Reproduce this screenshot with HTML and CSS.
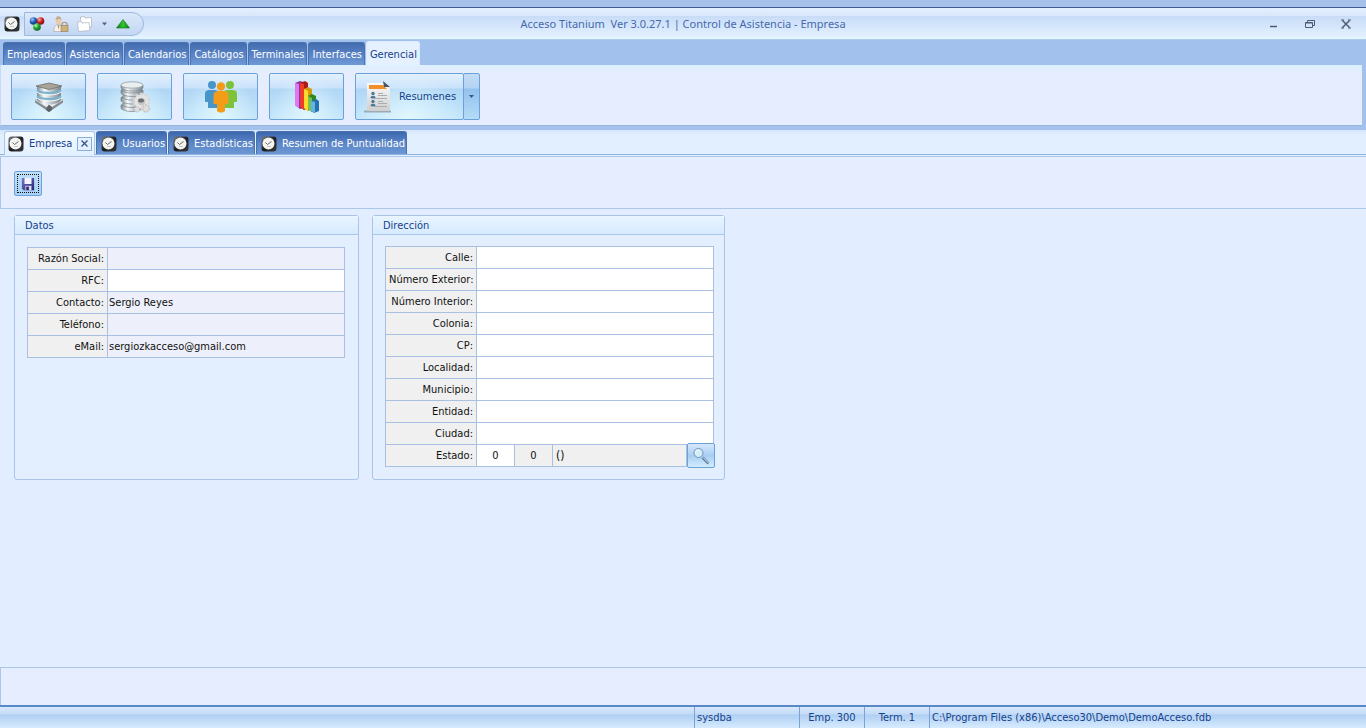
FILE: index.html
```html
<!DOCTYPE html>
<html lang="es">
<head>
<meta charset="utf-8">
<title>Acceso Titanium - Empresa</title>
<link rel="stylesheet" href="styles.css">
</head>
<body>
<svg class="defs" aria-hidden="true">
  <defs>
    <linearGradient id="silver" x1="0" x2="1" y1="0" y2="0"><stop offset="0" stop-color="#7d878d"/><stop offset=".3" stop-color="#f7fafb"/><stop offset=".55" stop-color="#c4cdd3"/><stop offset="1" stop-color="#7b848a"/></linearGradient>
    <linearGradient id="dark" x1="0" x2="1" y1="0" y2="1"><stop offset="0" stop-color="#7c8084"/><stop offset=".5" stop-color="#1d1e20"/><stop offset="1" stop-color="#3a3c3f"/></linearGradient>
    <linearGradient id="green" x1="0" x2="1" y1="0" y2="0"><stop offset="0" stop-color="#0b7a0b"/><stop offset=".5" stop-color="#35c335"/><stop offset="1" stop-color="#0b820f"/></linearGradient>
    <linearGradient id="disk" x1="0" x2="1" y1="0" y2="1"><stop offset="0" stop-color="#7a76c8"/><stop offset="1" stop-color="#252273"/></linearGradient>
    <linearGradient id="paper" x1="0" x2="0" y1="0" y2="1"><stop offset="0" stop-color="#fafafa"/><stop offset="1" stop-color="#cfcfcf"/></linearGradient>
    <radialGradient id="ballBlue" cx=".35" cy=".3" r=".8"><stop offset="0" stop-color="#9cc8ff"/><stop offset=".5" stop-color="#1f5bb8"/><stop offset="1" stop-color="#0a2766"/></radialGradient>
    <radialGradient id="ballRed" cx=".35" cy=".3" r=".8"><stop offset="0" stop-color="#ffaaa0"/><stop offset=".5" stop-color="#c9201c"/><stop offset="1" stop-color="#6e0808"/></radialGradient>
    <radialGradient id="ballGreen" cx=".35" cy=".3" r=".8"><stop offset="0" stop-color="#b4f7b0"/><stop offset=".5" stop-color="#1c9f2a"/><stop offset="1" stop-color="#07541a"/></radialGradient>
    <symbol id="clock" viewBox="0 0 16 16">
      <rect x=".5" y=".5" width="15" height="15" rx="3" fill="url(#dark)"/>
      <circle cx="7.500" cy="7.500" r="6" fill="#f4f5f1"/>
      <path d="M4.500 6.500 6.500 8.500 10.500 5.500" fill="none" stroke="#666"/>
      <path d="M6 10.500h4" stroke="#bbb" stroke-width=".8"/>
    </symbol>
  </defs>
</svg>
<div class="app">
  <div class="desktop-edge"></div>
  <header class="titlebar">
    <div class="quick">
      <svg class="icon16"><use href="#clock"/></svg>
      <div class="quick-bar">
        <button class="plain" aria-label="Módulos"><svg width="16" height="16" viewBox="0 0 16 16"><circle cx="4.500" cy="5" r="3.800" fill="url(#ballBlue)"/><circle cx="11.500" cy="5" r="3.800" fill="url(#ballRed)"/><circle cx="8" cy="11" r="3.800" fill="url(#ballGreen)"/></svg></button>
        <button class="plain" aria-label="Bloquear usuario"><svg width="16" height="16" viewBox="0 0 16 16"><path d="M1 15.500c0-4 1-7 4-7s5 2 5 7z" fill="#f6f3ef" stroke="#aaa29b" stroke-width=".6"/><path d="m4.500 9 1 5 1-5z" fill="#a89880"/><ellipse cx="5.500" cy="4.500" rx="2.800" ry="4" fill="#eec9a3"/><path d="M2.600 4C2.600-1 8.400-1 8.400 4 7 2.500 5 2.500 2.600 4z" fill="#bcae9b"/><path d="M9 10V8.500c0-3 5-3 5 0V10" fill="none" stroke="#a59881" stroke-width="1.200"/><rect x="8" y="9.500" width="7" height="6" fill="#ceb27a" stroke="#91794c" stroke-width=".6"/></svg></button>
        <button class="plain" aria-label="Ventanas"><svg width="16" height="16" viewBox="0 0 16 16"><path d="M3.500 4.500V1l4-.5.500 1.500 6.500-.5V11h-3" fill="#fff" stroke="#aab2bd" stroke-width=".7"/><path d="m.5 6 4-.5.500 1.500 7-.5 1 8-11.500 1z" fill="#fff" stroke="#aab2bd" stroke-width=".7"/></svg></button>
        <button class="plain" aria-label="Más"><svg width="7" height="4" viewBox="0 0 7 4"><path d="M1 .5h5L3.500 3.500z" fill="#4c6187"/></svg></button>
        <button class="plain" aria-label="Subir"><svg width="14" height="10" viewBox="0 0 14 10"><path d="M7 .5 13.500 9H.5z" fill="url(#green)" stroke="#0a7210" stroke-width=".6"/></svg></button>
      </div>
    </div>
    <h1 class="title">Acceso Titanium&nbsp; Ver 3.0.27.1 | Control de Asistencia - Empresa</h1>
    <div class="window-buttons">
      <button class="plain" aria-label="Minimizar"><svg width="10" height="10" viewBox="0 0 10 10"><path d="M1 7.500h7" stroke="#4d5c73" stroke-width="1.500"/></svg></button>
      <button class="plain" aria-label="Restaurar"><svg width="10" height="10" viewBox="0 0 10 10"><path d="M2.500 3V1.500h7v5H8" fill="none" stroke="#4d5c73"/><path d="M.5 3.500h7v5h-7zM.5 4h7" fill="none" stroke="#4d5c73"/></svg></button>
      <button class="plain" aria-label="Cerrar"><svg width="10" height="10" viewBox="0 0 10 10"><path d="m1.500 1.500 7 7m0-7-7 7" stroke="#4d5c73" stroke-width="1.500"/><path d="M0 1h3M7 1h3M0 9h3M7 9h3" stroke="#4d5c73"/></svg></button>
    </div>
  </header>

  <section class="ribbon">
    <nav class="ribbon-tabs">
      <button class="rtab">Empleados</button><button class="rtab">Asistencia</button><button class="rtab">Calendarios</button><button class="rtab">Catálogos</button><button class="rtab">Terminales</button><button class="rtab">Interfaces</button><button class="rtab active">Gerencial</button>
    </nav>
    <div class="ribbon-body">
      <button class="tool" aria-label="Empresa"><svg width="30" height="32" viewBox="0 0 30 32"><path d="m1 19 14 8 14-8v2.500L15 31 1 21.500z" fill="#858a8e"/><path d="m1 19 14-6 14 6-14 9z" fill="#eceff0" stroke="#a3a8ab" stroke-width=".6"/><path d="m12.500 26.500 2.500-3 3 2.500v3L15 31l-2.500-1.500z" fill="#5d6469"/><path d="M3 5v14c3 6 21 6 24 0V5z" fill="url(#silver)"/><path d="M3 9c4 4 20 4 24 0M3 15c4 4 20 4 24 0" fill="none" stroke="#79b3cc" stroke-width="1.800"/><path d="M3 11c4 4 20 4 24 0M3 17c4 4 20 4 24 0" fill="none" stroke="#f1f6f8"/><path d="M2 5 15 2l13 3-13 3.500z" fill="#aaa397" stroke="#6f706e" stroke-width=".8"/></svg></button>
      <button class="tool" aria-label="Usuarios"><svg width="32" height="32" viewBox="0 0 32 32"><g fill="url(#silver)" stroke="#7d868d" stroke-width=".7"><path d="M2 24v3.500c4 4 18 4 22 0V24z"/><ellipse cx="13" cy="23.500" rx="10" ry="3"/><path d="M2 16.500V20c4 4 18 4 22 0v-3.500z"/><ellipse cx="13" cy="16" rx="10" ry="3"/><path d="M2 9v3.500c4 4 18 4 22 0V9z"/><ellipse cx="13" cy="9" rx="10" ry="3"/><path d="M2 4v3c4 4 18 4 22 0V4z"/></g><ellipse cx="13" cy="4" rx="11" ry="3.200" fill="#e9eeef" stroke="#a5adb2"/><circle cx="22.500" cy="20.500" r="5.500" fill="#c4c7ca" stroke="#e4e3e2" stroke-width="3.500"/><circle cx="22.500" cy="20.500" r="7.800" fill="none" stroke="#d8d6d5" stroke-width="2" stroke-dasharray="3 2"/><ellipse cx="22" cy="19.500" rx="3" ry="2" fill="#696e73"/><circle cx="27" cy="27.500" r="3.500" fill="#dfdfde" stroke="#c3c4c5" stroke-width="1.500" stroke-dasharray="2 1"/><circle cx="18" cy="28.500" r="2.500" fill="#dfdfde" stroke="#c3c4c5" stroke-dasharray="2 1"/></svg></button>
      <button class="tool" aria-label="Estadísticas"><svg width="34" height="32" viewBox="0 0 34 32"><g fill="#4895c9"><circle cx="8" cy="4" r="4"/><path d="M1 13c0-4 3-4 7-4s7 0 7 4v8h-2v6H4v-6H1z"/></g><g fill="#7ec23c"><circle cx="26" cy="4" r="4"/><path d="M19 13c0-4 3-4 7-4s7 0 7 4v8h-3v6h-9v-6h-2z"/></g><g fill="#f39c19"><circle cx="17" cy="5.500" r="4.200"/><path d="M9.500 15c0-5 3-5 7.500-5s7.500 0 7.500 5v8H21v7c-2 2-6 2-8 0v-7H9.500z"/></g></svg></button>
      <button class="tool" aria-label="Gráficas"><svg width="26" height="32" viewBox="0 0 26 32"><path d="m1 2 5-2 3 1v26l-3 1-5-4z" fill="#8f2dab"/><path d="m1 2 4 1v24l-4-3z" fill="#dd79ec"/><path d="m6 2 5-2 3 2v25l-4 2-4-3z" fill="#ac1818"/><path d="m6 2 4 1v26l-4-3z" fill="#ee3a2b"/><path d="m10 8 4-2 4 2v20l-4 2-4-3z" fill="#d39a0d"/><path d="m10 8 4 2v20l-4-3z" fill="#ffd92e"/><path d="m14 15 4-2 4 2v14l-4 2-4-3z" fill="#31861d"/><path d="m14 15 4 2v14l-4-3z" fill="#72c44a"/><path d="m17 20 5-2 3 2v10l-5 2-3-2z" fill="#2871b1"/><path d="m17 20 4 1v11l-4-2z" fill="#66b3e5"/></svg></button>
      <div class="split">
        <button class="tool wide"><svg width="32" height="32" viewBox="0 0 32 32"><path d="M1 30.500h27" stroke="#9caab7" stroke-width="2"/><path d="M4 2h17l6 5v23H4z" fill="url(#paper)"/><path d="M6 4h14l4 4H6z" fill="#f18f29"/><path d="m20 0 7 6h-6z" fill="#465667"/><g fill="#4a7896"><circle cx="10" cy="12.500" r="1.700"/><path d="M7.500 17c0-3 5-3 5 0z"/><circle cx="10" cy="20.500" r="1.700"/><path d="M7.500 25c0-3 5-3 5 0z"/></g><path d="M15 12.500h5M15 14.500h9M8 17.500h16M15 20.500h5M15 22.500h9M8 25.500h16" stroke="#a9adb1"/></svg>Resumenes</button>
        <button class="tool drop" aria-label="Más resúmenes"><svg width="5" height="3" viewBox="0 0 5 3"><path d="M0 0h5L2.500 3z" fill="#31558d"/></svg></button>
      </div>
    </div>
  </section>

  <nav class="doc-tabs">
    <div class="dtab active"><svg class="icon16"><use href="#clock"/></svg><span>Empresa</span><button class="tab-close" aria-label="Cerrar Empresa"><svg width="7" height="7" viewBox="0 0 7 7"><path d="m.5.5 6 6m0-6-6 6" stroke="#33528a" stroke-width="1.300"/></svg></button></div>
    <button class="dtab"><svg class="icon16"><use href="#clock"/></svg>Usuarios</button>
    <button class="dtab"><svg class="icon16"><use href="#clock"/></svg>Estadísticas</button>
    <button class="dtab"><svg class="icon16"><use href="#clock"/></svg>Resumen de Puntualidad</button>
  </nav>

  <div class="toolbar">
    <button class="save" aria-label="Guardar"><svg width="14" height="14" viewBox="0 0 16 16"><path d="M1 1h14v14H3l-2-2z" fill="url(#disk)"/><path d="M4 1h8v7H4z" fill="#f3f4ff"/><path d="M5 10h7v5H5z" fill="#d9dbf1"/><path d="M6 11h3v4H6z" fill="#2a2866"/></svg></button>
  </div>

  <main class="workspace">
    <section class="group">
      <h2 class="group-title">Datos</h2>
      <form class="fields">
        <label for="razon">Razón Social:</label><input id="razon" readonly>
        <label for="rfc">RFC:</label><input id="rfc" class="editable">
        <label for="contacto">Contacto:</label><input id="contacto" readonly value="Sergio Reyes">
        <label for="telefono">Teléfono:</label><input id="telefono" readonly>
        <label for="email">eMail:</label><input id="email" readonly value="sergiozkacceso@gmail.com">
      </form>
    </section>
    <section class="group">
      <h2 class="group-title">Dirección</h2>
      <form class="fields address">
        <label for="calle">Calle:</label><input id="calle" class="editable">
        <label for="numext">Número Exterior:</label><input id="numext" class="editable">
        <label for="numint">Número Interior:</label><input id="numint" class="editable">
        <label for="colonia">Colonia:</label><input id="colonia" class="editable">
        <label for="cp">CP:</label><input id="cp" class="editable">
        <label for="localidad">Localidad:</label><input id="localidad" class="editable">
        <label for="municipio">Municipio:</label><input id="municipio" class="editable">
        <label for="entidad">Entidad:</label><input id="entidad" class="editable">
        <label for="ciudad">Ciudad:</label><input id="ciudad" class="editable">
        <label for="estado">Estado:</label>
        <div class="state">
          <input id="estado" class="editable" value="0">
          <input aria-label="Clave de estado" readonly value="0">
          <input class="state-name" aria-label="Nombre de estado" readonly value="()">
          <button type="button" class="search" aria-label="Buscar estado"><svg width="18" height="18" viewBox="0 0 18 18"><path d="m10.500 10.500 6 6" stroke="#5b7b9d" stroke-width="2.500"/><path d="m11 10.500 5.500 5.500" stroke="#dfe9f4"/><circle cx="6.500" cy="6" r="4.500" fill="#d3ecfa" stroke="#7193b3"/><path d="M3.500 6c0-2 1-3 3-3" fill="none" stroke="#fff"/></svg></button>
        </div>
      </form>
    </section>
  </main>

  <div class="bottom-panel"></div>
  <footer class="status">
    <span></span><span>sysdba</span><span class="center">Emp. 300</span><span class="center">Term. 1</span><span>C:\Program Files (x86)\Acceso30\Demo\DemoAcceso.fdb</span>
  </footer>
</div>
</body>
</html>
```
FILE: styles.css
```css
* { box-sizing: border-box; }
body { margin: 0; font-family: "DejaVu Sans Condensed", "Noto Sans", sans-serif; font-size: 11px; line-height: 14px; color: #111; background: #e1eeff; }
button, input { font: inherit; color: inherit; margin: 0; }
button { padding: 0; border: 0; cursor: default; }
svg { display: block; flex: none; }
.defs { position: absolute; width: 0; height: 0; }
.icon16 { width: 16px; height: 16px; }
.plain { background: none; display: flex; align-items: center; }
.app { min-height: 100vh; display: flex; flex-direction: column; }
.desktop-edge { height: 8px; background: #a6c1e9; border-bottom: 1px solid #3c5c93; }

.titlebar { height: 32px; display: grid; grid-template-columns: 1fr auto 1fr; align-items: center; background: linear-gradient(#e3efff 0, #d9e8fb 8px, #c8dcf7 8px, #e1f0ff 28px, #e3f5ff 30px); border-bottom: 1px solid #abcbec; }
.quick { display: flex; align-items: center; padding-left: 4px; gap: 4px; }
.quick-bar { height: 24px; display: flex; align-items: center; gap: 8px; padding: 0 13px 0 4px; border: 1px solid #9eb8de; border-radius: 0 12px 12px 0; background: linear-gradient(#dbe8fb, #c3d6f2); }
.title { margin: 0; font: 11px/16px "Noto Sans", "Open Sans", sans-serif; color: #4868ad; }
.window-buttons { display: flex; justify-content: flex-end; gap: 26px; padding-right: 15px; }

.ribbon { background: #a2c2ed; padding: 0 4px 3px 0; border-bottom: 1px solid #a2c2ed; }
.ribbon-tabs { height: 25px; display: flex; align-items: flex-end; gap: 1px; padding-left: 3px; }
.rtab { height: 23px; padding: 2px 2px 0 3px; color: #fff; background: linear-gradient(#426cae, #5c86c8 60%, #6f9ad6); border: 1px solid #4a72b0; border-bottom: 0; border-radius: 3px 3px 0 0; }
.rtab.active { height: 24px; color: #15428b; background: #e5f1ff; border-color: #dcebff; }
.ribbon-body { display: flex; gap: 11px; padding: 8px 10px 5px; background: linear-gradient(#ddf0ff, #e5edfe 8px); border-left: 1px solid #c5dcf7; border-bottom: 1px solid #94b6df; }
.tool { width: 75px; height: 47px; display: flex; align-items: center; justify-content: center; color: #15428b; border: 1px solid #6ba1d9; border-radius: 2px; background: radial-gradient(ellipse at 50% 100%, #e0f7ff, transparent 70%), linear-gradient(#e2f1ff 0, #c9e1fa 14px, #b0d6f5 15px, #c5e7fb 100%); }
.split { display: flex; }
.tool.wide { width: 109px; gap: 4px; }
.tool.drop { width: 17px; margin-left: -1px; background: linear-gradient(#c4dcf6 0, #b3d2f2 14px, #93c1ec 15px, #b5dcf8 100%); }

.doc-tabs { height: 25px; display: flex; align-items: flex-end; gap: 1px; padding: 0 4px; background: linear-gradient(#d4e5fc, #e2efff 5px); border-bottom: 1px solid #8fb2dc; }
.dtab { height: 23px; display: flex; align-items: center; gap: 5px; padding: 1px 1px 0 4px; color: #fff; background: linear-gradient(#3c67ae, #5a85c6 50%, #6d98d5); border: 1px solid #4a72b0; border-bottom: 0; border-radius: 3px 3px 0 0; }
.dtab.active { height: 24px; margin-bottom: -1px; padding: 0 2px 0 3px; color: #15428b; background: linear-gradient(#f6fbff, #e2efff); border-color: #a9c8ea; }
.tab-close { width: 15px; height: 14px; display: grid; place-items: center; border: 1px solid #88aede; background: #e4f0ff; }

.toolbar { height: 53px; padding: 14px 13px; background: #e5edfe; border: 1px solid #abc7e9; border-width: 1px 0 1px 1px; margin-top: 1px; }
.save { width: 28px; height: 25px; display: grid; place-items: center; border: 1px solid #6ba1d9; border-radius: 2px; background: linear-gradient(#c1e0f8, #a6d0f5); outline: 1px dotted #111; outline-offset: -4px; }

.workspace { flex: 1; display: flex; gap: 13px; padding: 6px 14px; align-items: flex-start; background: #e2edff; }
.group { min-height: 265px; border: 1px solid #a9c4e6; border-radius: 3px; background: #e3efff; }
.group-title { margin: 0; height: 19px; padding: 3px 10px 0; font-size: 11px; font-weight: 400; line-height: 14px; color: #15428b; background: linear-gradient(#e9f5ff, #d6eaff); border-bottom: 1px solid #a9c8ea; }
.fields { display: grid; grid-template-columns: 80px 237px; grid-auto-rows: 22px; margin: 12px 13px 12px 12px; border: solid #a9c0e3; border-width: 1px 0 0 1px; }
.fields.address { grid-template-columns: 91px 237px; margin: 11px 10px 12px 12px; }
.fields label { padding: 4px 3px 0; text-align: right; white-space: nowrap; background: #f0f0f0; border: solid #a9c0e3; border-width: 0 1px 1px 0; }
.fields input { width: 100%; min-width: 0; padding: 0 1px; border: solid #a9c0e3; border-width: 0 1px 1px 0; border-radius: 0; background: #edf0fa; outline: 0; }
.fields input.editable { background: #fff; }
.state { display: grid; grid-template-columns: 38px 38px 1fr 27px; grid-template-rows: 22px; }
.fields .state input { text-align: center; background: #f0f0f0; }
.fields .state .editable { background: #fff; }
.fields .state .state-name { text-align: left; font-size: 12px; padding-left: 3px; }
.search { width: 28px; height: 25px; margin-top: -2px; display: grid; place-items: center; border: 1px solid #6ba1d9; border-radius: 2px; background: linear-gradient(#d6e8fc, #a8cdf3 50%, #d1ecfd); }

.bottom-panel { height: 38px; background: #e5edfe; border: 1px solid #abc7e9; border-width: 1px 0 0 1px; }
.status { height: 23px; display: grid; grid-template-columns: 694px 105px 65px 65px 1fr; color: #15428b; border-top: 2px solid #5a88c6; background: linear-gradient(#d9e9fc, #c4dbf6 7px, #b0cff3 8px, #d6ebff); }
.status span { padding: 4px 2px 0; border-left: 1px solid #7ba2d6; white-space: nowrap; }
.status span:first-child { border-left: 0; }
.status .center { text-align: center; }
```
